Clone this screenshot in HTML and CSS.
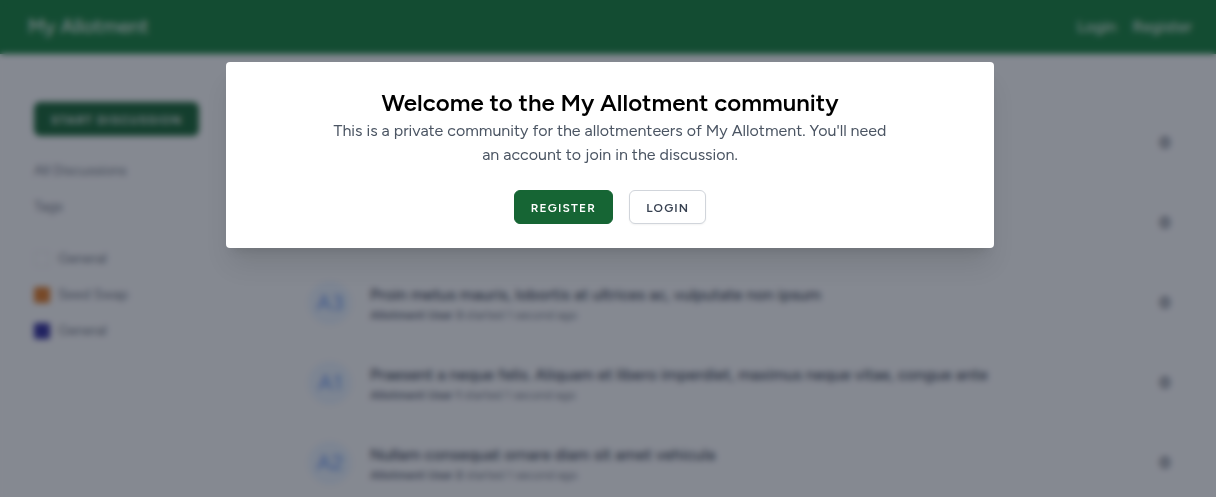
FILE: index.html
```html
<!DOCTYPE html>
<html lang="en">
<head>
<meta charset="utf-8">
<meta name="viewport" content="width=device-width, initial-scale=1">
<title>My Allotment</title>
<link rel="stylesheet" href="styles.css">
</head>
<body>
<div class="page">
  <header class="topbar">
    <a class="brand" href="#">My Allotment</a>
    <nav class="topnav">
      <a href="#">Login</a>
      <a href="#">Register</a>
    </nav>
  </header>
  <div class="layout">
    <aside class="sidebar">
      <button class="btn btn-start" type="button">Start discussion</button>
      <a class="side-link" href="#">All Discussions</a>
      <a class="side-link" href="#">Tags</a>
      <ul class="tags">
        <li><a class="tag" href="#"><span class="swatch"></span>General</a></li>
        <li><a class="tag" href="#"><span class="swatch swatch-orange"></span>Seed Swap</a></li>
        <li><a class="tag" href="#"><span class="swatch swatch-indigo"></span>General</a></li>
      </ul>
    </aside>
    <main class="discussions">
      <article class="row"><span class="count">0</span></article>
      <article class="row"><span class="count">0</span></article>
      <article class="row">
        <span class="avatar">A3</span>
        <div class="summary">
          <a class="title" href="#">Proin metus mauris, lobortis at ultrices ac, vulputate non ipsum</a>
          <p class="meta"><b>Allotment User 3</b> started 1 second ago</p>
        </div>
        <span class="count">0</span>
      </article>
      <article class="row">
        <span class="avatar">A1</span>
        <div class="summary">
          <a class="title" href="#">Praesent a neque felis. Aliquam et libero imperdiet, maximus neque vitae, congue ante</a>
          <p class="meta"><b>Allotment User 1</b> started 1 second ago</p>
        </div>
        <span class="count">0</span>
      </article>
      <article class="row">
        <span class="avatar">A2</span>
        <div class="summary">
          <a class="title" href="#">Nullam consequat ornare diam sit amet vehicula</a>
          <p class="meta"><b>Allotment User 2</b> started 1 second ago</p>
        </div>
        <span class="count">0</span>
      </article>
    </main>
  </div>
</div>
<div class="overlay">
  <section class="modal" role="dialog" aria-modal="true" aria-labelledby="welcome-title">
    <h2 class="modal-title" id="welcome-title">Welcome to the My Allotment community</h2>
    <p class="modal-text">This is a private community for the allotmenteers of My Allotment. You'll need an account to join in the discussion.</p>
    <div class="actions">
      <button class="btn" type="button">Register</button>
      <button class="btn btn-outline" type="button">Login</button>
    </div>
  </section>
</div>
</body>
</html>
```
FILE: styles.css
```css
* { box-sizing: border-box; }

body {
  margin: 0;
  height: 100vh;
  overflow: hidden;
  background: #f9fafb;
  color: #374151;
  font: 16px/24px Figtree, Lato, sans-serif;
}

a { color: inherit; text-decoration: none; }

.topbar {
  display: flex;
  align-items: center;
  justify-content: space-between;
  padding: 12px 24px 14px 28px;
  background: #15803d;
  color: #fff;
}

.brand { font-size: 20px; line-height: 28px; font-weight: 400; }

.topnav { display: flex; gap: 16px; padding-top: 2px; }

.layout {
  display: grid;
  grid-template-columns: 240px 1fr;
  gap: 34px;
  padding: 48px 46px 0 34px;
}

.sidebar { display: flex; flex-direction: column; align-items: flex-start; gap: 12px; }

.btn {
  height: 34px;
  padding: 1px 16px 0;
  border: 1px solid #166534;
  border-radius: 6px;
  background: #166534;
  color: #fff;
  font: 600 12px/16px Figtree, Lato, sans-serif;
  letter-spacing: 0.1em;
  text-transform: uppercase;
}

.btn-start { margin-bottom: 11px; }

.btn-outline {
  border-color: #d1d5db;
  background: #fff;
  color: #374151;
  box-shadow: 0 1px 2px rgba(0, 0, 0, 0.05);
}

.side-link, .tag { color: #6b7280; font-size: 14px; }

.tags {
  display: grid;
  gap: 12px;
  margin: 16px 0 0;
  padding: 0;
  list-style: none;
}

.tag { display: flex; align-items: center; gap: 8px; }

.swatch { width: 16px; height: 16px; border: 1px solid #e5e7eb; border-radius: 2px; }
.swatch-orange { border-color: #dd7a28; background: #dd7a28; }
.swatch-indigo { border-color: #312e9b; background: #312e9b; }

.discussions { padding-top: 1px; }

.row { display: flex; align-items: center; gap: 18px; height: 80px; }

.avatar {
  display: grid;
  place-items: center;
  width: 44px;
  height: 44px;
  border-radius: 50%;
  background: #e8f2fc;
  color: #6d9af0;
  font-size: 22px;
}

.title { color: #374151; font-weight: 500; }
.meta { margin: 0; color: #6b7280; font-size: 12px; line-height: 16px; }
.count { margin-left: auto; color: #374151; font-size: 16px; font-weight: 600; }

.overlay {
  position: fixed;
  inset: 0;
  display: flex;
  align-items: flex-start;
  justify-content: center;
  padding: 62px 0 0 4px;
  background: rgba(17, 24, 39, 0.5);
  backdrop-filter: blur(3px);
}

.modal {
  display: flex;
  flex-direction: column;
  align-items: center;
  width: 100%;
  max-width: 768px;
  padding: 25px 24px 24px;
  border-radius: 4px;
  background: #fff;
  box-shadow: 0 20px 25px -5px rgba(0, 0, 0, 0.1), 0 8px 10px -6px rgba(0, 0, 0, 0.1);
  text-align: center;
}

.modal-title { margin: 0; color: #000; font-size: 24px; line-height: 32px; font-weight: 600; }
.modal-text { max-width: 568px; margin: 0; color: #4b5563; }
.actions { display: flex; gap: 16px; margin-top: 23px; }
```
